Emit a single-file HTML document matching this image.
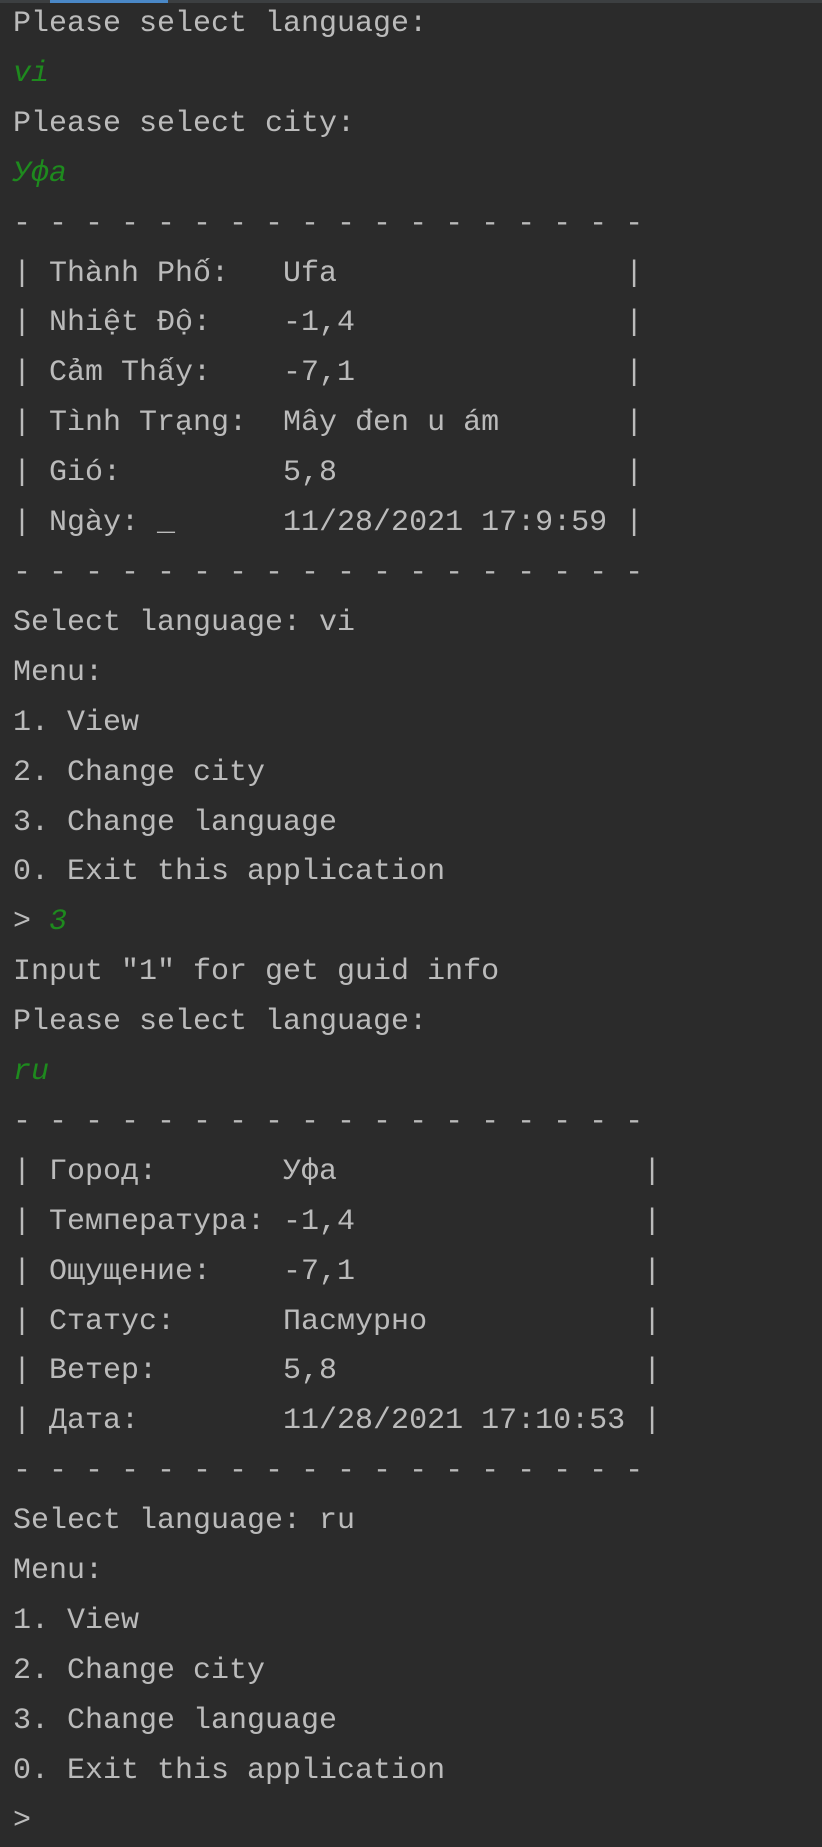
<!DOCTYPE html>
<html><head><meta charset="utf-8"><style>
html,body{margin:0;padding:0;background:#2b2b2b;width:822px;height:1823px;overflow:hidden}
.bar{position:absolute;top:0;left:0;width:822px;height:3px;background:#3c3f41}
.blue{position:absolute;top:0;left:50px;width:118px;height:3px;background:#4a88c7}
pre{position:absolute;left:13px;top:0px;margin:0;font-family:"Liberation Mono","DejaVu Sans Mono",monospace;font-size:30px;line-height:49.9px;color:#bbbbbb;white-space:pre}
.g{color:#1e8a1e;font-style:italic}
</style></head><body>
<div class="bar"></div><div class="blue"></div>
<pre>Please select language:
<span class="g">vi</span>
Please select city:
<span class="g">Уфа</span>
- - - - - - - - - - - - - - - - - -
| Thành Phố:   Ufa                |
| Nhiệt Độ:    -1,4               |
| Cảm Thấy:    -7,1               |
| Tình Trạng:  Mây đen u ám       |
| Gió:         5,8                |
| Ngày: _      11/28/2021 17:9:59 |
- - - - - - - - - - - - - - - - - -
Select language: vi
Menu:
1. View
2. Change city
3. Change language
0. Exit this application
&gt; <span class="g">3</span>
Input "1" for get guid info
Please select language:
<span class="g">ru</span>
- - - - - - - - - - - - - - - - - -
| Город:       Уфа                 |
| Температура: -1,4                |
| Ощущение:    -7,1                |
| Статус:      Пасмурно            |
| Ветер:       5,8                 |
| Дата:        11/28/2021 17:10:53 |
- - - - - - - - - - - - - - - - - -
Select language: ru
Menu:
1. View
2. Change city
3. Change language
0. Exit this application
&gt;</pre>
</body></html>
